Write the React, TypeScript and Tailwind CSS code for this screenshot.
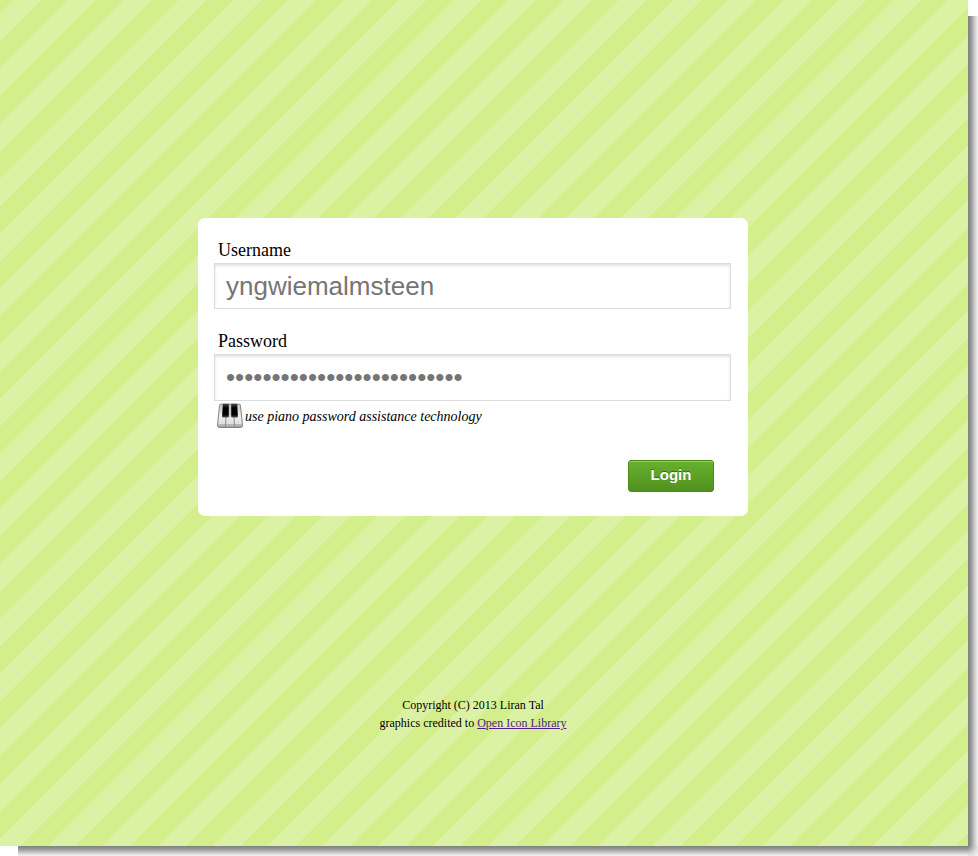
import React from "react";

function PianoIcon() {
  return (
    <svg width="26" height="26" viewBox="0 0 26 26" aria-hidden="true">
      <defs>
        <linearGradient id="keys" x1="0" y1="0" x2="0" y2="1">
          <stop offset="0" stopColor="#c4c4c4" />
          <stop offset="0.5" stopColor="#f0f0f0" />
          <stop offset="0.85" stopColor="#dedede" />
          <stop offset="1" stopColor="#8a8a8a" />
        </linearGradient>
        <linearGradient id="black" x1="0" y1="0" x2="0" y2="1">
          <stop offset="0" stopColor="#4a4a4a" />
          <stop offset="0.3" stopColor="#000" />
          <stop offset="0.8" stopColor="#000" />
          <stop offset="1" stopColor="#555" />
        </linearGradient>
      </defs>
      <path
        d="M3.6 1.2h18.8q.9 0 1 1l2.1 19.6q.1 2.7-1.8 2.7H2.3Q.4 24.5.5 21.8L2.6 2.2q.1-1 1-1z"
        fill="url(#keys)"
        stroke="#858585"
      />
      <path d="M1.2 21.5h23.6" stroke="#b4b4b4" />
      <path d="M9 12L8.5 24M17 12l.5 12" stroke="#8a8a8a" />
      <path d="M13 2v12" stroke="#b4b4b4" />
      <path d="M5.8.8h6v12.8q0 .9-1 .9H6q-1 0-.9-1z" fill="url(#black)" />
      <path d="M14.2.8h6l.7 12.7q.1 1-.9 1h-4.8q-1 0-1-.9z" fill="url(#black)" />
    </svg>
  );
}

const inputClass =
  "block w-full border border-[#dcdcdc] bg-white px-[11px] font-['Liberation_Sans',Arial,sans-serif] text-[26px] text-[#757575] shadow-[inset_0_2px_3px_#e4e4e4] outline-none placeholder:text-[#757575] placeholder:opacity-100";

const labelClass = "block px-1 text-[18px] leading-[26px]";

export default function App() {
  return (
    <div className="grid min-h-screen grid-cols-[1fr_10px] grid-rows-[1fr_10px] bg-white font-['Liberation_Serif','Times_New_Roman',serif] text-black">
      <main className="flex flex-col items-center bg-[linear-gradient(135deg,#d3ef8b_12.5%,#dbf2a4_12.5%,#dbf2a4_37.5%,#d3ef8b_37.5%,#d3ef8b_62.5%,#dbf2a4_62.5%,#dbf2a4_87.5%,#d3ef8b_87.5%)] bg-size-[55px_55px] pt-[218px] pr-[22px]">
        <form
          className="w-full max-w-[550px] rounded-[7px] bg-white pt-[19px] pr-[17px] pb-6 pl-4"
          onSubmit={(e) => e.preventDefault()}
        >
          <label htmlFor="username" className={labelClass}>
            Username
          </label>
          <input
            id="username"
            type="text"
            placeholder="yngwiemalmsteen"
            className={`${inputClass} h-[46px]`}
          />
          <label htmlFor="password" className={`${labelClass} mt-[19px]`}>
            Password
          </label>
          <input
            id="password"
            type="password"
            placeholder="••••••••••••••••••••••••••"
            className={`${inputClass} h-[47px]`}
          />
          <div className="flex items-end gap-[2px] pt-[2px] pl-[3px]">
            <PianoIcon />
            <em className="text-[14px] leading-6">
              use piano password assistance technology
            </em>
          </div>
          <div className="mt-[31px] flex justify-end pr-[17px]">
            <button
              type="submit"
              className="h-8 w-[86px] rounded-[3px] border border-[#4b8a17] bg-[linear-gradient(#68b12f,#50911e)] pb-[2px] font-['Liberation_Sans',Arial,sans-serif] text-[15px] leading-5 font-bold text-white shadow-[inset_0_1px_0_#94cc63] [text-shadow:0_-1px_0_#396715]"
            >
              Login
            </button>
          </div>
        </form>
        <footer className="mt-[180px] text-center text-[12px] leading-[18px]">
          <p>Copyright (C) 2013 Liran Tal</p>
          <p>
            graphics credited to{" "}
            <a href="#" className="text-[#551a8b] underline">
              Open Icon Library
            </a>
          </p>
        </footer>
      </main>
      <div className="mt-4 bg-[linear-gradient(to_right,#808080,#969696_30%,#c8c8c8_65%,#f4f4f4)]" />
      <div className="ml-[18px] bg-[linear-gradient(#808080,#969696_30%,#c8c8c8_65%,#f4f4f4)]" />
      <div className="bg-[radial-gradient(circle_at_top_left,#808080,#a8a8a8_25%,#dcdcdc_60%,#f8f8f8)]" />
    </div>
  );
}
